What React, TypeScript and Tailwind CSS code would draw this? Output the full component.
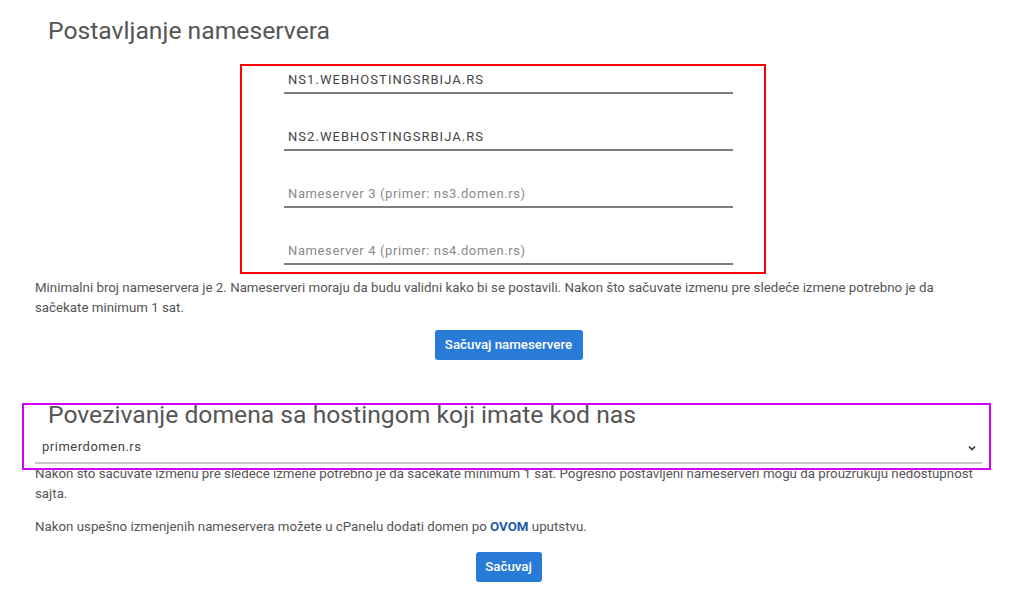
import React from "react";

const fields = [
  { value: "NS1.WEBHOSTINGSRBIJA.RS", placeholder: "Nameserver 1" },
  { value: "NS2.WEBHOSTINGSRBIJA.RS", placeholder: "Nameserver 2" },
  { value: "", placeholder: "Nameserver 3 (primer: ns3.domen.rs)" },
  { value: "", placeholder: "Nameserver 4 (primer: ns4.domen.rs)" },
];

const App = () => {
  return (
    <div className="relative min-h-[600px] w-[1024px] bg-white font-['Roboto','Liberation_Sans',sans-serif] text-[#555]">
      <div className="w-[947px] pl-[35px] box-content">
        {/* Nameserveri */}
        <h2 className="h-[37px] pl-[13px] pt-[17px] text-[24.7px] leading-[28px] font-normal text-[#555]">
          Postavljanje nameservera
        </h2>

        <div className="mx-auto w-[449px]">
          {fields.map((f, i) => (
            <div key={i} className="pt-[27px]">
              <input
                readOnly
                defaultValue={f.value}
                placeholder={f.placeholder}
                className="block h-[30px] w-full border-b-2 border-[#7c7c7c] bg-transparent pl-[4px] pt-[2px] text-[13px] tracking-[0.08em] text-[#444] outline-none placeholder:tracking-[0.047em] placeholder:text-[#8a8a8a]"
              />
            </div>
          ))}
        </div>

        <p className="mt-[13px] text-[13.3px] leading-[20px]">
          Minimalni broj nameservera je 2. Nameserveri moraju da budu validni kako bi se postavili. Nakon što sačuvate izmenu pre sledeće izmene potrebno je da sačekate minimum 1 sat.
        </p>

        <div className="mt-[12px] flex justify-center">
          <button className="h-[30px] w-[148px] rounded-[3px] bg-[#2a7ad7] text-[13.3px] font-medium text-white">
            Sačuvaj nameservere
          </button>
        </div>

        {/* Povezivanje domena */}
        <h2 className="mt-[41px] pl-[13px] text-[24.7px] leading-[28px] font-normal text-[#555]">
          Povezivanje domena sa hostingom koji imate kod nas
        </h2>

        <div className="flex h-[35px] items-end justify-between border-b-2 border-[#c6c6c6] pb-[6px] pl-[7px] pr-[5px]">
          <span className="text-[13px] tracking-[0.04em] text-[#444]">primerdomen.rs</span>
          <svg width="10" height="10" viewBox="0 0 10 10" className="mb-[3px]">
            <path d="M2 3.5 L5 6.5 L8 3.5" fill="none" stroke="#333" strokeWidth="1.6" />
          </svg>
        </div>

        <p className="text-[13.3px] leading-[20px]">
          Nakon što sačuvate izmenu pre sledeće izmene potrebno je da sačekate minimum 1 sat. Pogrešno postavljeni nameserveri mogu da prouzrukuju nedostupnost sajta.
        </p>

        <p className="mt-[13px] text-[13.3px] leading-[20px]">
          Nakon uspešno izmenjenih nameservera možete u cPanelu dodati domen po{" "}
          <a className="font-bold text-[#1f5aa8]">OVOM</a> uputstvu.
        </p>

        <div className="mt-[15px] flex justify-center">
          <button className="h-[30px] w-[66px] rounded-[3px] bg-[#2a7ad7] text-[13.3px] font-medium text-white">
            Sačuvaj
          </button>
        </div>
      </div>

      {/* Annotation boxes */}
      <div className="pointer-events-none absolute left-[240px] top-[64px] h-[210px] w-[526px] border-2 border-[#ff0000]" />
      <div className="pointer-events-none absolute left-[22px] top-[403px] h-[67px] w-[969px] border-2 border-[#d400ff]" />
    </div>
  );
};

export default App;
